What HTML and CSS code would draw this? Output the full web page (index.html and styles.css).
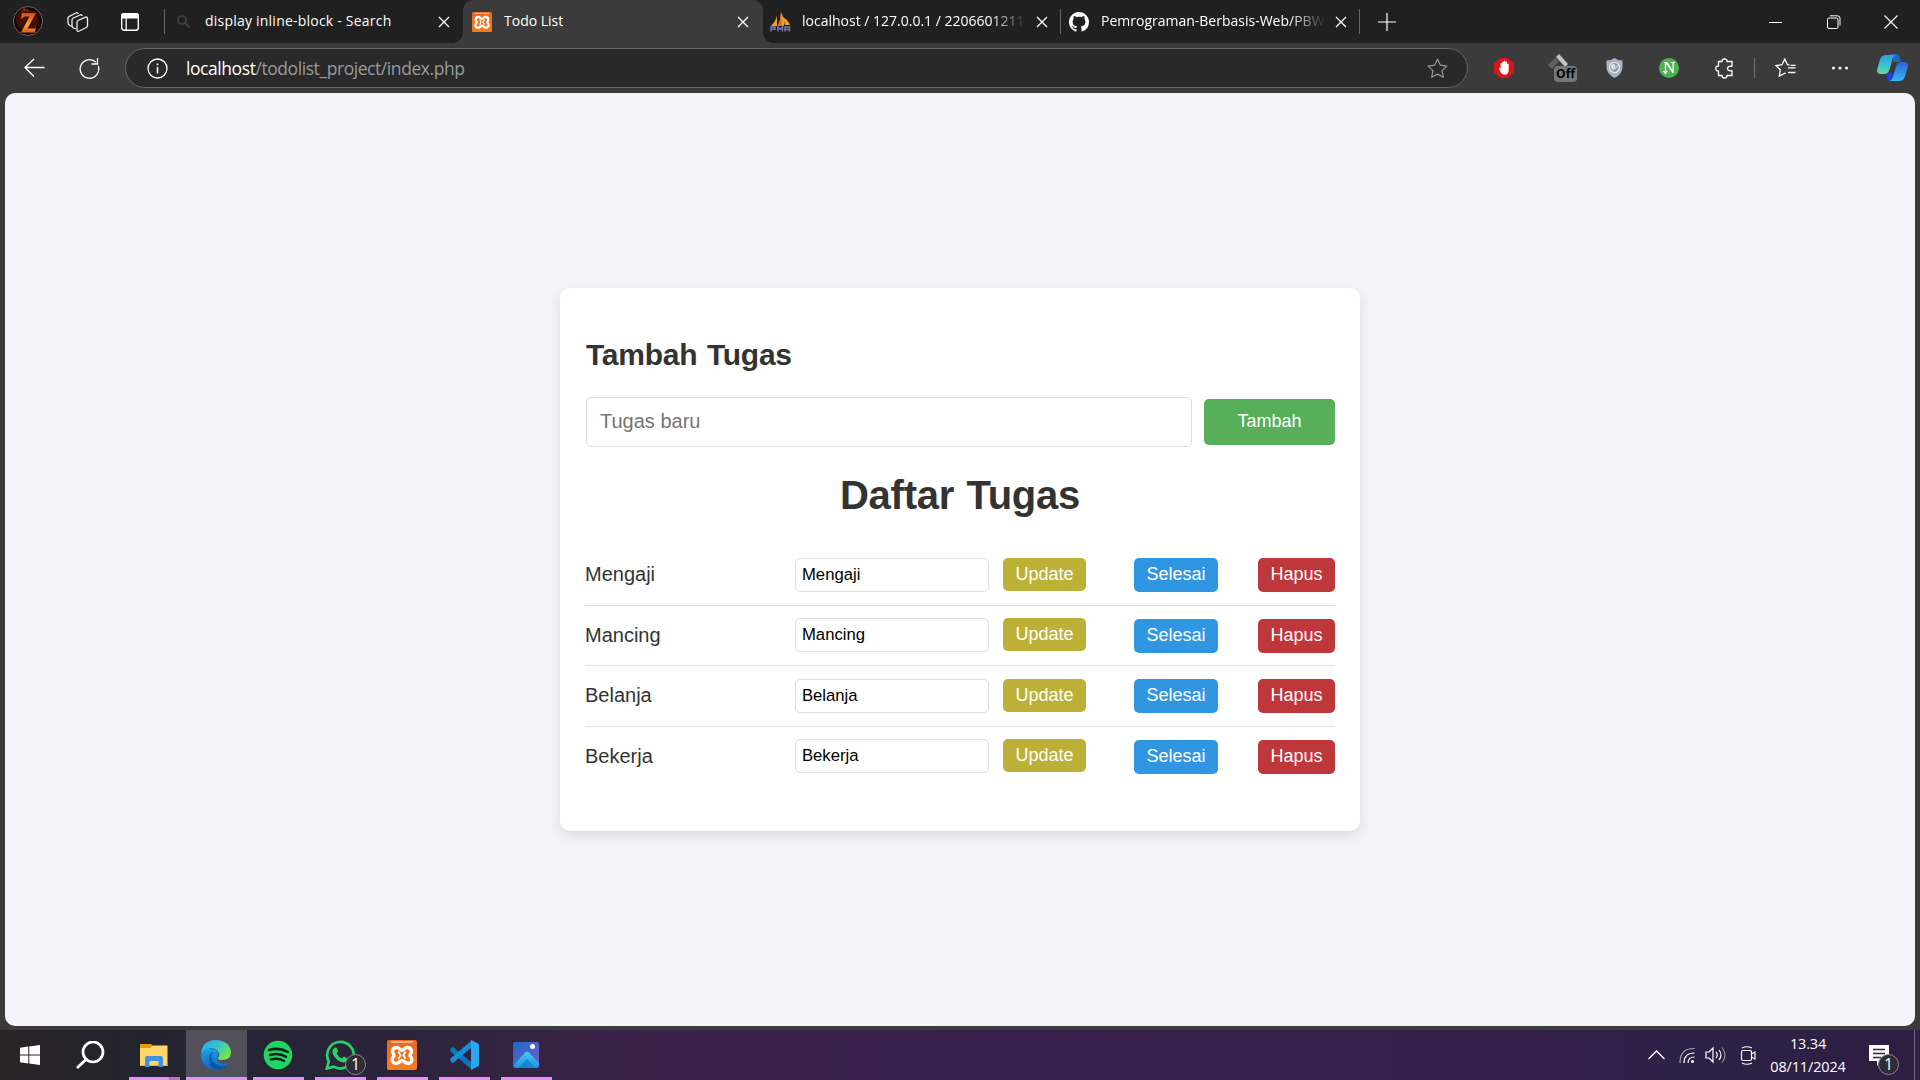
FILE: index.html
```html
<!DOCTYPE html>
<html lang="id">
<head>
<meta charset="utf-8">
<title>Todo List</title>
<link rel="stylesheet" href="styles.css">
</head>
<body>
<svg class="defs" width="0" height="0">
  <defs>
    <linearGradient id="orange" x1="0" y1="0" x2="0" y2="1"><stop offset="0" stop-color="#e06a22"/><stop offset="1" stop-color="#ff7a1e"/></linearGradient>
    <linearGradient id="edgeTop" x1="0" y1="0" x2="1" y2=".6"><stop offset="0" stop-color="#28a8e8"/><stop offset=".55" stop-color="#36c6d0"/><stop offset="1" stop-color="#6fe84a"/></linearGradient>
    <linearGradient id="edgeLow" x1="0" y1="0" x2="0" y2="1"><stop offset="0" stop-color="#1fa4e4"/><stop offset="1" stop-color="#0f66c8"/></linearGradient>
    <linearGradient id="cpA" x1="0" y1="0" x2="0" y2="1"><stop offset="0" stop-color="#2aa0dc"/><stop offset=".5" stop-color="#3cc0d4"/><stop offset="1" stop-color="#60dc96"/></linearGradient>
    <linearGradient id="cpB" x1="0" y1="0" x2="0" y2="1"><stop offset="0" stop-color="#2c64d8"/><stop offset="1" stop-color="#34b4f4"/></linearGradient>
    <linearGradient id="photo" x1="0" y1="0" x2="1" y2="1"><stop offset="0" stop-color="#1a6cc8"/><stop offset="1" stop-color="#7a5cc0"/></linearGradient>
    <linearGradient id="hill" x1="0" y1="0" x2="0" y2="1"><stop offset="0" stop-color="#48c8fa"/><stop offset="1" stop-color="#1a96e0"/></linearGradient>
    <linearGradient id="fire" x1="0" y1="0" x2="0" y2="1"><stop offset="0" stop-color="#d84a18"/><stop offset=".6" stop-color="#f7a33c"/><stop offset="1" stop-color="#e65a1c"/></linearGradient>
    <symbol id="close" viewBox="0 0 12 12"><path d="M1 1l10 10M11 1L1 11" fill="none" stroke="#fff" stroke-width="1.3"/></symbol>
    <symbol id="xampp" viewBox="0 0 30 30">
      <rect width="30" height="30" rx="2" fill="url(#orange)"/>
      <path d="M3.500 1h23l-1 2h-21z" fill="#f3ab7e"/>
      <path d="M9.500 7.500c2.500-.4 3.500 2.800 5.500 2.800s3-3.200 5.500-2.800c2.500.2 4 1.800 4 4 0 1.900-1.500 2.200-1.500 3.800s1.900 2 1.900 4.200c0 2.700-2 4.200-4.400 3.900-2.500-.2-3.500-2.800-5.500-2.800s-3 2.600-5.500 2.800c-2.400.3-4.400-1.200-4.400-3.900 0-2.200 1.900-2.600 1.900-4.200s-1.500-1.900-1.500-3.800c0-2.200 1.500-3.800 4-4z" fill="none" stroke="#fff" stroke-width="3.400"/>
      <path d="M11.500 11.500l2 3.800-2 3.700M18.500 11.500l-2 3.800 2 3.700" fill="none" stroke="#fff" stroke-width="1.800"/>
    </symbol>
  </defs>
</svg>

<div class="tabstrip">
  <svg class="avatar" width="30" height="30" viewBox="0 0 30 30"><circle cx="15" cy="15" r="14.500" fill="#1d0505" stroke="#6a6565"/><path d="M4 7Q8 2 15 4q8-1 10 6 2 9-4 13-9 4-15-2Q1 14 4 7z" fill="#40100a"/><path d="M9 7h14l-8.500 15.500H22l1-3-1 7H8l8.500-16h-5L8 13z" fill="url(#fire)"/><path d="M9 6l2-4 1 3 2-2 1 3" fill="none" stroke="#9c2c10"/></svg>
  <svg class="workspaces" width="22" height="22" viewBox="0 0 22 22" fill="#202020" stroke="#eee" stroke-width="1.300"><path d="M6 16L3 14.500Q1 13.500 1 11.500V7q0-1.200 1.200-1.700L9 2q1.800-.8 2 1"/><path d="M9 18l-2.500-1Q5 16 5 14.500V9q0-1.500 1.300-2L13 4q2-.8 2 1"/><path d="M11 9.500l7.500-3.300q2-.7 2 1.300v7q0 1.400-1.200 2l-7 3.500q-2.300 1-2.300-1.200V11.500q0-1.400 1-2z"/></svg>
  <svg class="panes" width="18" height="18" viewBox="0 0 18 18"><rect x=".7" y=".7" width="16.600" height="16.600" rx="2.500" fill="none" stroke="#fff" stroke-width="1.400"/><path d="M0 5.500V3q0-3 3-3h12q3 0 3 3v2.500zM4.500 5h1.300v12H4.500z" fill="#fff"/></svg>
  <i class="sep"></i>
  <div class="tab tab-first">
    <svg class="fav" width="13" height="13" viewBox="0 0 13 13" fill="none" stroke="#444" stroke-width="1.600"><circle cx="5" cy="5" r="4"/><path d="M8 8l4.500 4.500"/></svg>
    <span class="tab-title t1">display inline-block - Search</span>
    <svg class="x" width="12" height="12"><use href="#close"/></svg>
  </div>
  <div class="tab active">
    <svg class="fav" width="20" height="20"><use href="#xampp"/></svg>
    <span class="tab-title t2">Todo List</span>
    <svg class="x" width="12" height="12"><use href="#close"/></svg>
  </div>
  <div class="tab tab-pma">
    <svg class="fav" width="21" height="20" viewBox="0 0 21 20"><path d="M1 14Q6 9 7 3v11zM8 14Q11 7 11 0q4 8 3 14zM15 13l-2-8q5 3 7 8z" fill="#f29b2c"/><path d="M8 14Q11 7 11 0l1 14z" fill="#c97a35"/><path d="M1 19.500V15h4v2.300H1M8 19.500V15l2.300 2.500L12.500 15v4.500M15 19.500V15h4.500v4.500M15 17.500h4" fill="none" stroke="#7476ac" stroke-width="1.500"/></svg>
    <span class="tab-title fade t3">localhost / 127.0.0.1 / 2206601211</span>
    <svg class="x" width="12" height="12"><use href="#close"/></svg>
  </div>
  <i class="sep"></i>
  <div class="tab tab-git">
    <svg class="fav" width="20" height="20" viewBox="0 0 16 16"><path fill="#fff" d="M8 0C3.580 0 0 3.580 0 8c0 3.540 2.290 6.530 5.470 7.590.4.070.55-.17.55-.38 0-.19-.01-.82-.01-1.490-2.010.37-2.530-.49-2.690-.94-.09-.23-.48-.94-.82-1.130-.28-.15-.68-.52-.01-.53.63-.01 1.080.58 1.230.82.72 1.210 1.870.87 2.330.66.070-.52.28-.87.510-1.070-1.780-.2-3.640-.89-3.640-3.950 0-.87.310-1.590.82-2.150-.08-.2-.36-1.020.08-2.120 0 0 .67-.21 2.200.82.640-.18 1.320-.27 2-.27s1.360.09 2 .27c1.530-1.040 2.200-.82 2.200-.82.440 1.100.16 1.920.08 2.120.51.560.82 1.270.82 2.150 0 3.070-1.870 3.750-3.650 3.950.29.25.54.73.54 1.480 0 1.070-.01 1.930-.01 2.200 0 .21.15.46.55.38A8.010 8.010 0 0 0 16 8c0-4.420-3.580-8-8-8z"/></svg>
    <span class="tab-title fade t4">Pemrograman-Berbasis-Web/PBW</span>
    <svg class="x" width="12" height="12"><use href="#close"/></svg>
  </div>
  <i class="sep"></i>
  <svg class="plus" width="18" height="18" viewBox="0 0 18 18"><path d="M9 0v18M0 9h18" stroke="#fff" stroke-width="1.200"/></svg>
  <div class="window-buttons">
    <svg width="14" height="14" viewBox="0 0 14 14"><path d="M0 7.500h13" stroke="#fff"/></svg>
    <svg width="14" height="14" viewBox="0 0 14 14" fill="none" stroke="#fff"><rect x=".5" y="3" width="10.500" height="10.500" rx="1.500"/><path d="M3 .8h7.500q2.500 0 2.500 2.500V10.500"/></svg>
    <svg width="14" height="14" viewBox="0 0 14 14"><path d="M.5.500l13 13M13.500.500l-13 13" stroke="#fff" stroke-width="1.100"/></svg>
  </div>
</div>

<div class="toolbar">
  <svg class="back" width="21" height="20" viewBox="0 0 21 20" fill="none" stroke="#fff" stroke-width="1.300"><path d="M10 1L1 9.500l9 9M1 9.500h19.500"/></svg>
  <svg class="reload" width="21" height="22" viewBox="0 0 21 22" fill="none" stroke="#fff" stroke-width="1.300"><path d="M19.300 9A9.300 9.300 0 1 1 17 5.300M18.500 1v6h-6"/></svg>
  <div class="address">
    <svg class="info" width="21" height="21" viewBox="0 0 21 21" fill="none" stroke="#fff" stroke-width="1.300"><circle cx="10.500" cy="10.500" r="9.500"/><path d="M10.500 9v6.500M10.500 5.500v1.700" stroke-width="1.600"/></svg>
    <span class="url"><b>localhost</b>/todolist_project/index.php</span>
    <svg class="star" width="21" height="21" viewBox="0 0 21 21" fill="none" stroke="#9a9a9a" stroke-width="1.200" stroke-linejoin="round"><path d="M10.500 1.300l2.900 5.900 6.400.9-4.700 4.500 1.200 6.600-5.800-3.100-5.800 3.100 1.200-6.600L1.200 8.100l6.400-.9z"/></svg>
  </div>
  <div class="extensions">
    <svg class="e-block" width="20" height="20" viewBox="0 0 20 20"><path d="M6 0h8l6 6v8l-6 6H6l-6-6V6z" fill="#dc1418"/><path d="M5 10.500q.2-1.500 1.600-.2V5.500q.9-1.200 1.500 0V4q.8-1.200 1.600 0v-.8q.8-1.200 1.600 0V4q.9-1.200 1.700 0v2q1-1.200 1.700 0v6q0 4.700-4.200 4.700-2.800 0-4-2.400z" fill="#fff"/></svg>
    <div class="e-off"><svg width="22" height="18" viewBox="0 0 22 18"><path d="M8 3l3-3 9 10-3 3z" fill="#c4c4c4"/><path d="M0 11l7-7 4 3-7 8z" fill="#606060"/></svg><span class="off-badge">Off</span></div>
    <svg class="e-shield" width="17" height="20" viewBox="0 0 17 20"><path d="M8.500 0Q12 2.500 16.500 2.500V9q0 7-8 11Q.5 16 .5 9V2.500Q5 2.500 8.500 0z" fill="#adb2c0"/><circle cx="8.500" cy="9.500" r="5" fill="#8f97aa" stroke="#e9ecf2" stroke-width="1.200"/><path d="M5 8l3-2 1 3-2 3zM9 11l4-5" fill="#dfe3ea" stroke="#dfe3ea"/></svg>
    <svg class="e-n" width="20" height="20" viewBox="0 0 20 20"><circle cx="10" cy="10" r="10" fill="#4bb350"/><path d="M5 4h3.500l5 8V5H12V4h4v1h-1.200v10h-1.300L7.200 6v8H5.800V5H5zM3.500 13h5.500l-2.700 3.500z" fill="#fff"/></svg>
    <svg class="e-puzzle" width="19" height="21" viewBox="0 0 19 21" fill="none" stroke="#fff" stroke-width="1.300" stroke-linejoin="round"><path d="M3.500 3.500H7Q6.700 1 9.500 1T12 3.500h5v4.800q-4.500-.5-4.500 2.200t4.500 2.200v4.800h-5Q12 20 9.500 20T7 17.500H3.500V13Q.8 13.200.8 10.500T3.500 8z"/></svg>
    <i class="tool-sep"></i>
    <svg class="e-fav" width="21" height="20" viewBox="0 0 21 20" fill="none" stroke="#fff" stroke-width="1.300"><path d="M14.500 7l-2-.3L9.800 1 7 6.700l-6 .9 4.300 4.200-1 6.200 5.500-2.900 1 .4M13 9.800h7.500M13 14.500h7.500M15.500 7.300l5 0"/></svg>
    <svg class="e-dots" width="18" height="4" viewBox="0 0 18 4" fill="#fff"><circle cx="2.500" cy="2" r="1.500"/><circle cx="9" cy="2" r="1.500"/><circle cx="15.500" cy="2" r="1.500"/></svg>
    <svg class="e-copilot" width="31" height="28" viewBox="0 0 31 28"><path d="M8 19h7l3 8h-4q-3.500 0-4.500-4z" fill="#2040dc"/><path d="M13 0h6q3 0 4 4l1 4h-7z" fill="#1a6cb8"/><path d="M9 1h10q-2.500.5-3.500 4l-3 10.500Q11 20 7 20H4q-5 0-3.700-5L3 5.500Q4.500 1 9 1z" fill="url(#cpA)"/><path d="M22 27H12q3-.5 4-4l3-10.500Q20.500 8 24 8h3q5 0 3.700 5L28 22.500Q26.500 27 22 27z" fill="url(#cpB)"/></svg>
  </div>
</div>

<div class="viewport">
  <main class="card">
    <h2>Tambah Tugas</h2>
    <form class="add">
      <div class="new-task">Tugas baru</div>
      <div class="btn add-btn">Tambah</div>
    </form>
    <h1>Daftar Tugas</h1>
    <div class="list">
      <div class="row"><span class="name">Mengaji</span><span class="edit">Mengaji</span><span class="btn update">Update</span><span class="btn done">Selesai</span><span class="btn delete">Hapus</span></div>
      <div class="row"><span class="name">Mancing</span><span class="edit">Mancing</span><span class="btn update">Update</span><span class="btn done">Selesai</span><span class="btn delete">Hapus</span></div>
      <div class="row"><span class="name">Belanja</span><span class="edit">Belanja</span><span class="btn update">Update</span><span class="btn done">Selesai</span><span class="btn delete">Hapus</span></div>
      <div class="row"><span class="name">Bekerja</span><span class="edit">Bekerja</span><span class="btn update">Update</span><span class="btn done">Selesai</span><span class="btn delete">Hapus</span></div>
    </div>
  </main>
</div>

<div class="taskbar">
  <div class="apps">
    <div class="app start"><svg width="20" height="20" viewBox="0 0 20 20" fill="#fff"><path d="M0 2.800l8.300-1.200v7.900H0zM9.300 1.400L20 0v9.500H9.300zM0 10.500h8.300v7.900L0 17.200zM9.300 10.500H20V20L9.300 18.600z"/></svg></div>
    <div class="app search"><svg width="30" height="28" viewBox="0 0 30 28" fill="none" stroke="#fff" stroke-width="2.700"><circle cx="18" cy="11" r="10"/><path d="M11 18.500L2 27"/></svg></div>
    <div class="app open stacked"><svg width="28" height="24" viewBox="0 0 28 24"><path d="M0 1h11l2.500 2.500V8H0z" fill="#e0a000"/><path d="M0 5h10l3-2.500h14.500V23H0z" fill="#ffd768"/><path d="M0 22h27.500v1H0z" fill="#eeb62c"/><path d="M5 24V15q0-2 2-2h14q2 0 2 2v9h-4.500v-6h-9v6z" fill="#3d94d8"/></svg></div>
    <div class="app open current"><svg width="30" height="30" viewBox="0 0 30 30"><path d="M0 16Q0 6 8 8q10 1 9 8-3 6 4 8 5 1 7.500-1.500Q24 30 15 30 1 29 0 16z" fill="url(#edgeLow)"/><path d="M10 15q0 9 10 11 5 .5 8-3.500Q24 30 15 30 8 27 8 19q0-6 5-7z" fill="#0d55a4"/><path d="M0 14Q1 0 15 0q14 1 15 12 0 8-9 8-5 0-4-2 2-2 1-5Q15 8 9 8q-6 0-9 6z" fill="url(#edgeTop)"/></svg></div>
    <div class="app open"><svg width="30" height="30" viewBox="0 0 30 30"><circle cx="15" cy="15" r="14.300" fill="#1ed760"/><path d="M6 10q10-3 19 2M7 15q9-2.500 16 1.800M8 19.500q7-2 13 1.500" fill="none" stroke="#171d1a" stroke-width="2.500" stroke-linecap="round"/></svg></div>
    <div class="app open"><svg width="30" height="30" viewBox="0 0 30 30"><path d="M1.800 28.500l2-7A13.300 13.300 0 1 1 8.700 26.600z" fill="none" stroke="#25d366" stroke-width="2.700"/><path d="M10 7.500q1.200-.5 1.700.5l1.300 3q.2.700-1.500 2.500 2 3.500 5.500 5 1.500-2 2-2l3.500 1.700q.5 3.800-4 4.300Q12 22 7.800 14q-1.500-4 2.200-6.500z" fill="#25d366"/></svg><span class="count">1</span></div>
    <div class="app open"><svg width="30" height="30"><use href="#xampp"/></svg></div>
    <div class="app open"><svg width="30" height="30" viewBox="0 0 30 30"><path d="M2 8l2-1 18 15v7L1 11z" fill="#0878bd"/><path d="M2 22l2 1 18-15V1L1 19z" fill="#1490d8"/><path d="M22 0l7 3.500Q30 4 30 5v20q0 1-1 1.500L22 30z" fill="#2aa6f2"/></svg></div>
    <div class="app open"><svg width="26" height="26" viewBox="0 0 26 26"><rect width="26" height="26" rx="2.500" fill="url(#photo)"/><path d="M1 23l11-12.500q2-2 4 0L26 21v2q-1 3-3 3H3q-2 0-2-3z" fill="url(#hill)"/><path d="M14 17l-9 9h17z" fill="#1586d4"/><circle cx="19.500" cy="4.500" r="2.500" fill="#fff"/></svg></div>
  </div>
  <div class="tray">
    <svg class="chev" width="17" height="10" viewBox="0 0 17 10" fill="none" stroke="#fff" stroke-width="1.300"><path d="M.5 9l8-8 8 8"/></svg>
    <svg class="wifi" width="16" height="17" viewBox="0 0 16 17" fill="none" stroke="#fff" stroke-width="1.200"><circle cx="13.500" cy="14.500" r="1.500" fill="#fff" stroke="none"/><path d="M9 16q0-6 6.500-6M5 16Q5 6 15.500 6" /><path d="M1 16Q1 1 15.500 1.500" opacity=".6"/></svg>
    <svg class="vol" width="22" height="18" viewBox="0 0 22 18" fill="none" stroke="#fff" stroke-width="1.200"><path d="M1 6h3l4-4v14l-4-4H1zM11 6q2.500 3 0 6M14 4q4 5 0 10"/><path d="M17 1.500q6 7.500 0 15" opacity=".5"/></svg>
    <svg class="cam" width="17" height="19" viewBox="0 0 17 19" fill="none" stroke="#fff" stroke-width="1.200"><rect x="1.500" y="4.500" width="10" height="10" rx="1.500"/><path d="M11.500 8l3.500-2v7l-3.500-2M2 2Q7-.5 12 2M2 17q5 2.500 10 0"/></svg>
    <div class="clock"><span class="time">13.34</span><span class="date">08/11/2024</span></div>
    <div class="notes"><svg width="20" height="21" viewBox="0 0 20 21"><path d="M0 0h20v16h-8l-4 5v-5H0z" fill="#fff"/><path d="M4 4.500h12M4 8.500h12M4 12.500h8" stroke="#312148" stroke-width="1.300"/></svg><span class="count">1</span></div>
    <i class="desktop-edge"></i>
  </div>
</div>
</body>
</html>
```
FILE: styles.css
```css
* { box-sizing: border-box; }
body {
  margin: 0;
  width: 1920px;
  height: 1080px;
  overflow: hidden;
  display: flex;
  flex-direction: column;
  background: #3b3b3b;
  font-family: "Liberation Sans", Arial, sans-serif;
}
svg { display: block; flex: none; }
.defs { position: absolute; }

/* Tab strip */
.tabstrip {
  height: 43px;
  flex: none;
  display: flex;
  align-items: center;
  background: #202020;
  color: #fff;
  font-family: "Open Sans", "Noto Sans", sans-serif;
  font-size: 14px;
}
.avatar { margin: 0 24px 1px 13px; }
.workspaces { margin-right: 32px; }
.panes { margin-right: 25px; }
.sep { width: 1px; height: 25px; background: #666; flex: none; }
.tab { height: 43px; display: flex; align-items: center; flex: none; }
.tab-title { white-space: nowrap; overflow: hidden; flex: none; line-height: 24px; padding-bottom: 1px; }
.tab .x { margin: 1px 0 0 auto; }
.tab-first { width: 298px; padding: 0 13px 0 12px; }
.tab-first .fav { margin-right: 15px; }
.tab.active {
  width: 300px;
  padding: 0 14px 0 9px;
  background: #3b3b3b;
  border-radius: 10px 10px 0 0;
  position: relative;
}
.tab.active::before,
.tab.active::after {
  content: "";
  position: absolute;
  bottom: 0;
  width: 10px;
  height: 10px;
}
.tab.active::before { left: -10px; background: radial-gradient(circle at 0 0, transparent 9.500px, #3b3b3b 10px); }
.tab.active::after { right: -10px; background: radial-gradient(circle at 100% 0, transparent 9.500px, #3b3b3b 10px); }
.tab.active .fav { margin-right: 12px; }
.tab-pma { width: 297px; padding: 0 12px 0 7px; }
.tab-pma .fav { margin-right: 11px; }
.tab-git { width: 298px; padding: 0 12px 0 8px; }
.tab-git .fav { margin-right: 12px; }
.fade { width: 225px; mask-image: linear-gradient(to right, #000 188px, transparent 225px); }
.t1 { letter-spacing: 0.220px; }
.plus { margin-left: 18px; }
.window-buttons { display: flex; gap: 43.500px; margin-left: auto; padding-right: 22px; }

/* Toolbar */
.toolbar { height: 50px; flex: none; display: flex; align-items: center; }
.back { margin-left: 24px; }
.reload { margin-left: 34px; }
.address {
  width: 1343px;
  height: 40px;
  margin-left: 25px;
  padding: 0 19px 0 21px;
  display: flex;
  align-items: center;
  border: 1px solid #666;
  border-radius: 20px;
  background: #292929;
}
.url {
  margin-left: 18px;
  font: 17.500px/26px "Open Sans", "Noto Sans", sans-serif;
  letter-spacing: -0.430px;
  color: #9a9a9a;
  white-space: nowrap;
  padding-bottom: 1px;
}
.url b { font-weight: 400; color: #fff; }
.star { margin-left: auto; }
.extensions { display: flex; align-items: center; height: 50px; margin-left: 26px; }
.e-off { width: 30px; height: 30px; margin: 2px 0 0 34px; position: relative; }
.off-badge {
  position: absolute;
  left: 6px;
  top: 12px;
  width: 23px;
  height: 16px;
  border-radius: 4px;
  background: #777;
  color: #000;
  font: 700 12px/16px "Open Sans", sans-serif;
  text-align: center;
}
.e-shield { margin-left: 28px; }
.e-n { margin-left: 36px; }
.e-puzzle { margin-left: 36px; }
.tool-sep { width: 1px; height: 20px; margin-left: 20px; background: #707070; }
.e-fav { margin-left: 20px; }
.e-dots { margin-left: 35px; }
.e-copilot { margin-left: 28px; }

/* Page */
.viewport {
  width: 1910px;
  height: 933px;
  flex: none;
  margin: 0 5px 4px;
  display: flex;
  align-items: center;
  justify-content: center;
  border-radius: 10px;
  background: #f4f3f9;
}
.card {
  width: 800px;
  height: 543px;
  padding: 25px;
  border-radius: 10px;
  background: #fff;
  box-shadow: 0 5px 12px rgba(0, 0, 0, .1);
  color: #333;
}
h2 { margin: 24px 0 24px 1px; font-size: 30px; line-height: 36px; letter-spacing: -0.250px; word-spacing: 1.500px; }
.add { display: flex; align-items: center; padding-left: 1px; }
.new-task {
  width: 606px;
  height: 50px;
  padding-left: 13px;
  border: 1px solid #ddd;
  border-radius: 5px;
  color: #757575;
  font-size: 20px;
  line-height: 46px;
}
.btn {
  display: block;
  height: 34px;
  border-radius: 5px;
  color: #fff;
  font-size: 18px;
  line-height: 32px;
  text-align: center;
}
.add-btn { width: 131px; height: 46px; margin-left: 12px; line-height: 44px; background: #57af5a; }
h1 { margin: 24px 0 0; font-size: 40px; line-height: 48px; text-align: center; letter-spacing: -0.250px; word-spacing: 1.500px; }
.list { margin-top: 26px; }
.row { height: 60.500px; padding-top: 1px; display: flex; align-items: center; border-bottom: 1px solid #ddd; }
.row:last-child { border-bottom-color: transparent; }
.name { width: 210px; font-size: 20px; line-height: 24px; padding-bottom: 2px; }
.edit {
  width: 194px;
  height: 34px;
  padding-left: 6px;
  border: 1px solid #ddd;
  border-radius: 5px;
  color: #000;
  font-size: 16.670px;
  line-height: 31px;
}
.update { width: 83px; height: 33px; margin: 0 0 1px 14px; background: #bcb136; }
.row:nth-child(even) .edit { margin-bottom: 1px; }
.row:nth-child(even) .update { margin-bottom: 2px; }
.done { width: 84px; margin-left: 48px; background: #3196e2; }
.delete { width: 77px; margin-left: 40px; background: #be373a; }

/* Taskbar */
.taskbar {
  height: 50px;
  flex: none;
  display: flex;
  justify-content: space-between;
  color: #fff;
  font-family: "Open Sans", "Noto Sans", sans-serif;
  background: linear-gradient(90deg, #292426 0, #242430 150px, #292439 330px, #31243f 480px, #3a2249 620px, #37204d 1000px, #35204c 1500px, #2e2046 1700px, #2e1e42 1920px);
}
.apps { display: flex; }
.app { width: 62px; height: 50px; display: flex; align-items: center; justify-content: center; position: relative; }
.app.start { width: 61px; padding-right: 2px; }
.app.search { padding-right: 4px; }
.app.open::after {
  content: "";
  position: absolute;
  left: 6px;
  bottom: 0;
  width: 51px;
  height: 3px;
  background: #e88ff4;
}
.app.stacked::after { background: linear-gradient(90deg, #e88ff4 40px, #b472c0 40px); }
.app.current { background: linear-gradient(#52505a, #50505b) 1px 0 / 61px 50px no-repeat; }
.app.current::after { left: 1px; width: 61px; }
.count {
  position: absolute;
  left: 36px;
  top: 24px;
  width: 21px;
  height: 21px;
  border: 1px solid #8a8890;
  border-radius: 50%;
  background: #2d2d35;
  font-size: 16px;
  line-height: 19px;
  text-align: center;
}
.tray { display: flex; align-items: center; }
.wifi { margin-left: 14px; }
.vol { margin-left: 10px; }
.cam { margin-left: 13px; }
.clock { width: 90px; margin-left: 6px; display: flex; flex-direction: column; align-items: center; font-size: 14.500px; line-height: 23px; padding-bottom: 1px; }
.time { letter-spacing: -0.200px; }
.date { letter-spacing: -0.150px; }
.notes { width: 46px; height: 50px; margin-left: 16px; padding-top: 15px; position: relative; }
.notes .count { left: 9px; }
.desktop-edge { width: 1px; height: 50px; background: #756b85; margin: 0 5px 0 -1px; }
```
